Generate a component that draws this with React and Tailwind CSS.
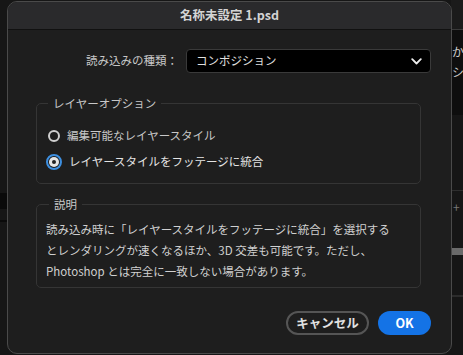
import React from 'react';

const font = { fontFamily: '"Noto Sans CJK JP", "Noto Sans", sans-serif' };

const Radio = ({ checked, label }) => (
    <label className="flex items-center gap-[7px] h-[20px]">
        {checked ? (
            <span className="w-[16px] h-[16px] rounded-full border-2 border-[#3d8fe0] flex items-center justify-center -ml-[2px]">
                <span className="w-[10px] h-[10px] rounded-full bg-[#e6e6e6] flex items-center justify-center">
                    <span className="w-[4px] h-[4px] rounded-full bg-[#222]"></span>
                </span>
            </span>
        ) : (
            <span className="w-[12px] h-[12px] rounded-full border-2 border-[#cfcfcf]"></span>
        )}
        <span className={checked ? 'text-[#e4e4e4]' : 'text-[#c8c8c8]'}>{label}</span>
    </label>
);

const App = () => {
    return (
        <div className="relative w-[463px] h-[355px] overflow-hidden bg-[#161616]" style={font}>
            {/* background app fragments */}
            <div className="absolute right-0 top-0 w-[12px] h-[30px] border-b border-[#3a3a3a] bg-[#1b1b1b]"></div>
            <div className="absolute right-0 top-[30px] w-[12px] h-[85px] bg-[#0e0e0e] text-[#cfcfcf] text-[12px] leading-[20px] pl-[1px] pt-[12px]">
                <div>か</div>
                <div>シ</div>
            </div>
            <div className="absolute right-0 top-[190px] w-[12px] h-[32px] border-t border-[#2e2e2e] text-[#777] text-[12px] leading-[32px] pl-[2px]">+</div>
            <div className="absolute right-0 top-[248px] w-[12px] h-[7px] bg-[#6a6a6a]"></div>
            <div className="absolute right-0 top-[295px] w-[12px] h-[2px] bg-[#2c2c2c]"></div>
            <div className="absolute left-0 top-[193px] w-[7px] h-[16px] bg-[#0a0a0a]"></div>
            <div className="absolute left-0 top-[220px] w-[7px] h-[2px] bg-[#0a0a0a]"></div>

            {/* dialog window */}
            <div className="absolute left-[7px] top-[1px] w-[445px] h-[353px] rounded-[10px] border border-[#4a4a4a] bg-[#1e1e1e] overflow-hidden flex flex-col">
                <div className="h-[28px] shrink-0 bg-[#2a2a2c] border-b border-[#111] flex items-center justify-center text-[12.5px] font-bold text-[#d4d4d4]">
                    名称未設定 1.psd
                </div>

                <div className="flex flex-col pl-[28px] pr-[30px] pt-[19px]">
                    <div className="flex items-center gap-[8px] pl-[50px] -mr-[10px] text-[11.5px]">
                        <span className="text-[#c8c8c8]">読み込みの種類：</span>
                        <div className="flex-1 h-[24px] rounded-[4px] bg-black border border-[#3a3a3a] flex items-center justify-between pl-[9px] pr-[8px] text-[#e0e0e0]">
                            <span>コンポジション</span>
                            <svg width="11" height="7" viewBox="0 0 11 7">
                                <path d="M1.2 1.2 L5.5 5.5 L9.8 1.2" fill="none" stroke="#eee" strokeWidth="1.8" strokeLinecap="round" strokeLinejoin="round" />
                            </svg>
                        </div>
                    </div>

                    <fieldset className="mt-[22px] border border-[#353535] rounded-[5px] pl-[8px] pr-[8px] pt-[15px] pb-[11px] text-[11.5px]">
                        <legend className="ml-[3px] px-[5px] text-[#c8c8c8] text-[11.5px] leading-[16px]">レイヤーオプション</legend>
                        <div className="flex flex-col gap-[6px] pl-[3px]">
                            <Radio label="編集可能なレイヤースタイル" />
                            <Radio checked label="レイヤースタイルをフッテージに統合" />
                        </div>
                    </fieldset>

                    <fieldset className="mt-[12px] border border-[#353535] rounded-[5px] pl-[9px] pr-[8px] pt-[7px] pb-[5px]">
                        <legend className="ml-[3px] px-[5px] text-[#c8c8c8] text-[11.5px] leading-[16px]">説明</legend>
                        <p className="text-[11.5px] leading-[21px] text-[#d0d0d0]">
                            読み込み時に「レイヤースタイルをフッテージに統合」を選択する
                            <br />
                            とレンダリングが速くなるほか、3D 交差も可能です。ただし、
                            <br />
                            Photoshop とは完全に一致しない場合があります。
                        </p>
                    </fieldset>

                    <div className="flex justify-end items-center gap-[9px] mt-[23px] -mr-[10px]">
                        <button className="h-[24px] w-[83px] rounded-full border-2 border-[#555] text-[12.5px] font-bold text-[#e2e2e2] flex items-center justify-center">
                            キャンセル
                        </button>
                        <button className="h-[24px] w-[53px] rounded-full bg-[#1473e6] text-[12.5px] font-bold text-white flex items-center justify-center">
                            OK
                        </button>
                    </div>
                </div>
            </div>
        </div>
    );
};

export default App;
